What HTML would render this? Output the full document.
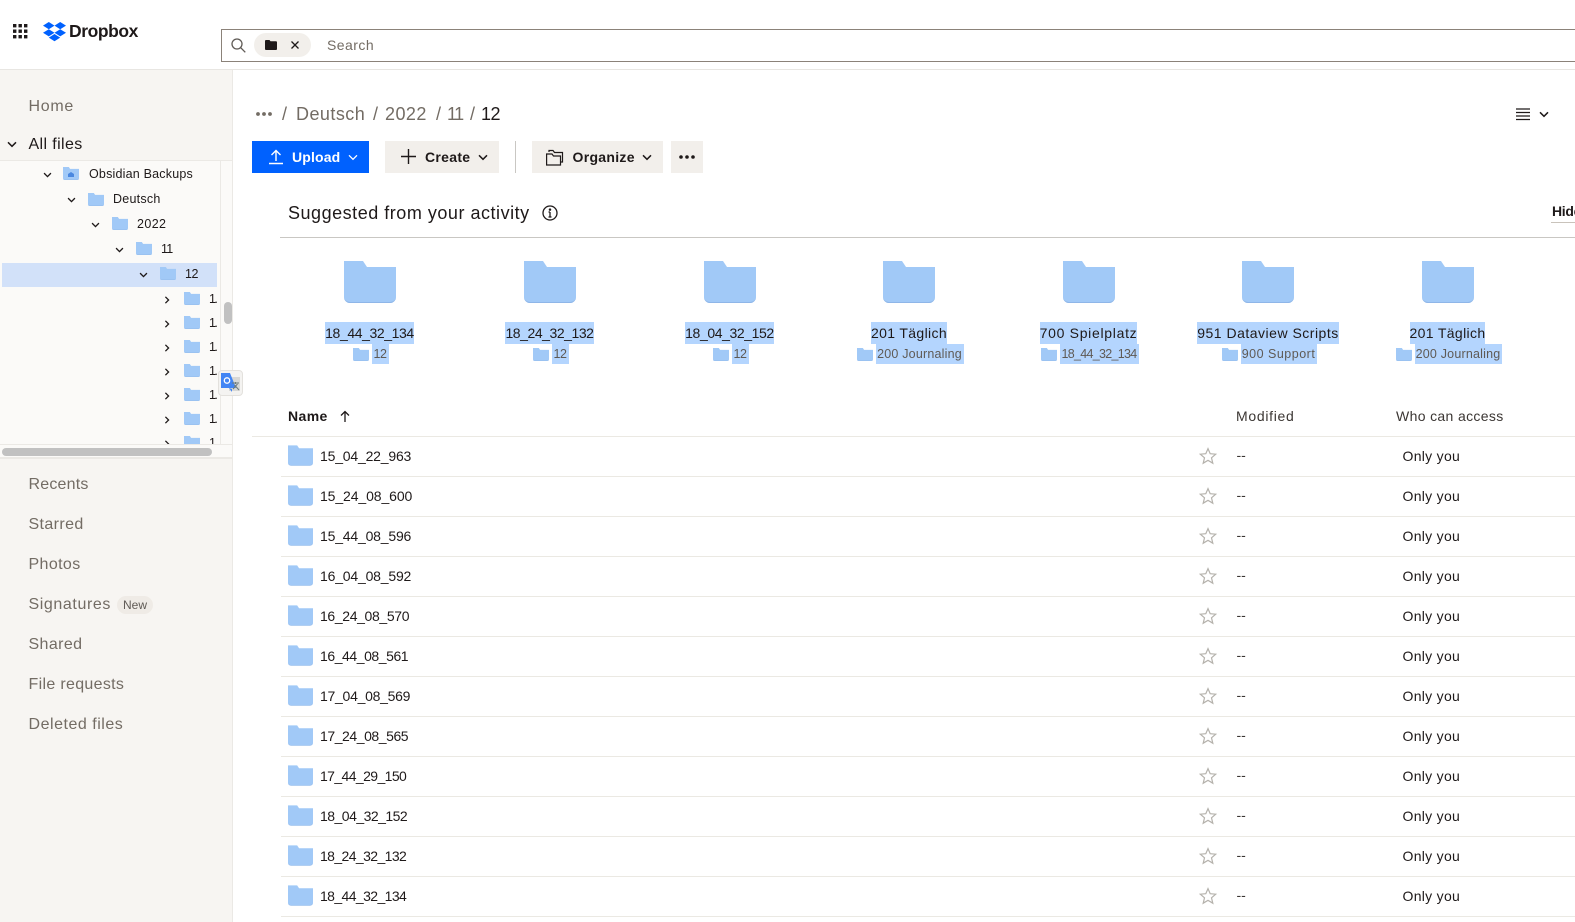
<!DOCTYPE html>
<html><head><meta charset="utf-8"><title>Dropbox</title>
<style>
html,body{margin:0;padding:0;width:1575px;height:922px;overflow:hidden;background:#fff}
body{position:relative;font-family:"Liberation Sans",sans-serif;color:#1e1919;font-size:14px}
.a{position:absolute}
.t{position:absolute;white-space:nowrap;line-height:20px;height:20px}
svg{display:block;overflow:visible}
.nav{left:28.5px;font-size:16px;letter-spacing:.38px;color:#736c64}
.tr{font-size:12.5px;color:#1e1919}
.cl{letter-spacing:-1.6px}
.btn{position:absolute;top:141px;height:32px;background:#f2efeb}
.bt{font-weight:bold;font-size:14px;letter-spacing:.15px}
.ln{position:absolute;left:281px;right:0;height:1px;background:#ebe9e3}
.nm{left:320px;font-size:14px;letter-spacing:-.19px}
.dd{left:1236.5px;color:#3b3633}
.oy{left:1402.5px;letter-spacing:.3px}
.s{position:absolute;width:179px;text-align:center}
.s1{display:inline-block;height:22px;line-height:22px;background:#b4d5fe;white-space:nowrap;font-size:14px}
.s2{display:flex;justify-content:center;align-items:center;height:20px;padding-left:3px;font-size:12.5px;color:#5f5a55;letter-spacing:.2px}
.s2 span{background:#b4d5fe;height:20px;line-height:20px;padding:0 2px 0 1px;margin-left:3px;white-space:nowrap}
</style></head><body>
<svg width="0" height="0" style="position:absolute">
<defs>
<symbol id="f" viewBox="0 0 52 42"><path fill="#a1c9f7" d="M0 0H19L23 6H52V36a6 6 0 0 1-6 6H6a6 6 0 0 1-6-6Z"/><path fill="#8fb6e8" d="M0 36a6 6 0 0 0 6 6H46a6 6 0 0 0 6-6a6 5.200 0 0 1-6 5H6a6 5.200 0 0 1-6-5Z"/></symbol>
<symbol id="cd" viewBox="0 0 10 7"><path d="M1 1.300L5 5.300L9 1.300" fill="none" stroke="#1e1919" stroke-width="1.500"/></symbol>
<symbol id="cr" viewBox="0 0 7 10"><path d="M1.500 1L5.500 5L1.500 9" fill="none" stroke="#1e1919" stroke-width="1.600"/></symbol>
<symbol id="st" viewBox="0 0 18 18"><path d="M9 1.600L11.200 6.700L16.700 7.200L12.500 10.800L13.800 16.200L9 13.300L4.200 16.200L5.500 10.800L1.300 7.200L6.800 6.700Z" fill="none" stroke="#b5b2ac" stroke-width="1.200"/></symbol>
</defs></svg>

<!-- header -->
<div class="a" style="left:0;top:69px;width:1575px;height:1px;background:#e8e6e2"></div>
<svg class="a" style="left:13px;top:24px" width="15" height="15" viewBox="0 0 15 15" fill="#1e1919"><rect x="0" y="0" width="3.400" height="3.400"/><rect x="5.500" y="0" width="3.400" height="3.400"/><rect x="11" y="0" width="3.400" height="3.400"/><rect x="0" y="5.500" width="3.400" height="3.400"/><rect x="5.500" y="5.500" width="3.400" height="3.400"/><rect x="11" y="5.500" width="3.400" height="3.400"/><rect x="0" y="11" width="3.400" height="3.400"/><rect x="5.500" y="11" width="3.400" height="3.400"/><rect x="11" y="11" width="3.400" height="3.400"/></svg>
<svg class="a" style="left:43px;top:21.500px" width="23" height="19" viewBox="0 0 23 19" fill="#0061fe"><path d="M5.800 0L11.500 3.600L5.800 7.200L0 3.600Z"/><path d="M17.200 0L23 3.600L17.200 7.200L11.500 3.600Z"/><path d="M0 10.800L5.800 7.200L11.500 10.800L5.800 14.400Z"/><path d="M17.200 7.200L23 10.800L17.200 14.400L11.500 10.800Z"/><path d="M5.800 15.600L11.500 12L17.200 15.600L11.500 19.200Z"/></svg>
<div class="t" style="left:69px;top:21px;font-size:17.500px;font-weight:bold;letter-spacing:-.42px">Dropbox</div>

<div class="a" style="left:221px;top:29px;width:1360px;height:31px;border:1px solid #8b8279;box-sizing:content-box"></div>
<svg class="a" style="left:231px;top:38px" width="15" height="15" viewBox="0 0 15 15" fill="none" stroke="#5f5a55" stroke-width="1.300"><circle cx="6" cy="6" r="5"/><path d="M9.700 9.700L14.300 14.300"/></svg>
<div class="a" style="left:254px;top:33px;width:57px;height:24px;border-radius:12px;background:#f2efeb"></div>
<svg class="a" style="left:265px;top:40px" width="12" height="10" viewBox="0 0 12 10" fill="#1e1919"><path d="M0 1a1 1 0 0 1 1-1H4.500L5.500 1.300H11a1 1 0 0 1 1 1V9a1 1 0 0 1-1 1H1a1 1 0 0 1-1-1Z"/></svg>
<svg class="a" style="left:291px;top:41px" width="8" height="8" viewBox="0 0 8 8" stroke="#1e1919" stroke-width="1.300"><path d="M.5 .5L7.500 7.500M7.500 .5L.5 7.500"/></svg>
<div class="t" style="left:327px;top:35px;color:#736c64;letter-spacing:.45px">Search</div>

<!-- sidebar -->
<div class="a" style="left:0;top:70px;width:232px;height:852px;background:#f7f5f2;border-right:1px solid #ebe9e5"></div>
<div class="t nav" style="top:97px;letter-spacing:.7px">Home</div>
<svg class="a" style="left:7px;top:141px" width="10" height="7"><use href="#cd"/></svg>
<div class="t nav" style="top:135px;color:#1e1919">All files</div>

<div class="a" style="left:0;top:160px;width:232px;height:299px;background:#fbfaf8;border-top:1px solid #ebe9e5;border-bottom:2px solid #ebe9e5;box-sizing:border-box"></div>
<div class="a" style="left:220px;top:160px;width:1px;height:284px;background:#ebe9e5"></div>
<div class="a" style="left:0;top:444px;width:232px;height:1px;background:#ebe9e5"></div>
<div class="a" style="left:2px;top:263px;width:215px;height:24px;background:#d2e1f9"></div>

<svg class="a" style="left:43px;top:172px" width="9" height="6"><use href="#cd"/></svg>
<svg class="a" style="left:63px;top:167px" width="16" height="13"><use href="#f"/></svg>
<svg class="a" style="left:68px;top:172px" width="6" height="5" viewBox="0 0 6 5" fill="#4a88e0"><path d="M0 2L3 0L6 2V5H0Z"/></svg>
<div class="t tr" style="left:89px;top:164px;letter-spacing:.2px">Obsidian Backups</div>

<svg class="a" style="left:67px;top:197px" width="9" height="6"><use href="#cd"/></svg>
<svg class="a" style="left:87.500px;top:193px" width="16" height="13"><use href="#f"/></svg>
<div class="t tr" style="left:113px;top:189px;letter-spacing:.25px">Deutsch</div>

<svg class="a" style="left:91px;top:222px" width="9" height="6"><use href="#cd"/></svg>
<svg class="a" style="left:111.500px;top:217px" width="16" height="13"><use href="#f"/></svg>
<div class="t tr" style="left:137px;top:214px;letter-spacing:.4px">2022</div>

<svg class="a" style="left:115px;top:247px" width="9" height="6"><use href="#cd"/></svg>
<svg class="a" style="left:135.500px;top:242px" width="16" height="13"><use href="#f"/></svg>
<div class="t tr" style="left:161px;top:239px;letter-spacing:-.8px">11</div>

<svg class="a" style="left:139px;top:272px" width="9" height="6"><use href="#cd"/></svg>
<svg class="a" style="left:159.500px;top:267px" width="16" height="13"><use href="#f"/></svg>
<div class="t tr" style="left:185px;top:264px;letter-spacing:-.4px">12</div>

<div class="a" style="left:0;top:288px;width:219px;height:156px;overflow:hidden">
<svg class="a" style="left:164px;top:8px" width="6" height="8"><use href="#cr"/></svg><svg class="a" style="left:183.500px;top:4px" width="16" height="13"><use href="#f"/></svg><div class="t tr cl" style="left:209px;top:1px">1.</div>
<svg class="a" style="left:164px;top:32px" width="6" height="8"><use href="#cr"/></svg><svg class="a" style="left:183.500px;top:28px" width="16" height="13"><use href="#f"/></svg><div class="t tr cl" style="left:209px;top:25px">1.</div>
<svg class="a" style="left:164px;top:56px" width="6" height="8"><use href="#cr"/></svg><svg class="a" style="left:183.500px;top:52px" width="16" height="13"><use href="#f"/></svg><div class="t tr cl" style="left:209px;top:49px">1.</div>
<svg class="a" style="left:164px;top:80px" width="6" height="8"><use href="#cr"/></svg><svg class="a" style="left:183.500px;top:76px" width="16" height="13"><use href="#f"/></svg><div class="t tr cl" style="left:209px;top:73px">1.</div>
<svg class="a" style="left:164px;top:104px" width="6" height="8"><use href="#cr"/></svg><svg class="a" style="left:183.500px;top:100px" width="16" height="13"><use href="#f"/></svg><div class="t tr cl" style="left:209px;top:97px">1.</div>
<svg class="a" style="left:164px;top:128px" width="6" height="8"><use href="#cr"/></svg><svg class="a" style="left:183.500px;top:124px" width="16" height="13"><use href="#f"/></svg><div class="t tr cl" style="left:209px;top:121px">1.</div>
<svg class="a" style="left:164px;top:152px" width="6" height="8"><use href="#cr"/></svg><svg class="a" style="left:183.500px;top:148px" width="16" height="13"><use href="#f"/></svg><div class="t tr cl" style="left:209px;top:145px">1.</div>
</div>
<div class="a" style="left:224px;top:302px;width:8px;height:22px;border-radius:4px;background:#c1c1c1"></div>
<div class="a" style="left:2px;top:448px;width:210px;height:8px;border-radius:4px;background:#c1c1c1"></div>

<div class="a" style="left:218px;top:370px;width:25px;height:26px;background:#f4f3f1;border:1px solid #e3e1dd;border-radius:4px;box-sizing:border-box"></div>
<svg class="a" style="left:221px;top:373px" width="20" height="20" viewBox="0 0 20 20"><rect x="8" y="4" width="11" height="14" fill="#d8d8d6"/><path d="M0 0H9L15 15H8L11 16L11 19L8 15H0Z" fill="#4285f4"/><path d="M11 10H18M14.500 9V11M12 16L16.500 11M13.500 12L18 17" stroke="#6d7a7a" stroke-width="1" fill="none"/><circle cx="6" cy="7.500" r="2.700" fill="none" stroke="#fff" stroke-width="1.300"/></svg>

<div class="t nav" style="top:475px;letter-spacing:.2px">Recents</div>
<div class="t nav" style="top:515px">Starred</div>
<div class="t nav" style="top:555px">Photos</div>
<div class="t nav" style="top:595px;letter-spacing:.6px">Signatures</div>
<div class="a" style="left:117px;top:596px;width:36px;height:18px;border-radius:9px;background:#efebe6;color:#5f5a55;font-size:12px;line-height:18px;text-align:center">New</div>
<div class="t nav" style="top:635px">Shared</div>
<div class="t nav" style="top:675px;letter-spacing:.32px">File requests</div>
<div class="t nav" style="top:715px;letter-spacing:.52px">Deleted files</div>

<!-- breadcrumb -->
<svg class="a" style="left:256px;top:112px" width="16" height="4" fill="#736c64"><circle cx="2" cy="2" r="1.900"/><circle cx="8" cy="2" r="1.900"/><circle cx="14" cy="2" r="1.900"/></svg>
<div class="t" style="left:282px;top:104px;font-size:18px;color:#736c64">/</div>
<div class="t" style="left:296px;top:104px;font-size:18px;color:#736c64;letter-spacing:.45px">Deutsch</div>
<div class="t" style="left:373px;top:104px;font-size:18px;color:#736c64">/</div>
<div class="t" style="left:385px;top:104px;font-size:18px;color:#736c64;letter-spacing:.45px">2022</div>
<div class="t" style="left:436px;top:104px;font-size:18px;color:#736c64">/</div>
<div class="t" style="left:447px;top:104px;font-size:18px;color:#736c64;letter-spacing:-1.500px">11</div>
<div class="t" style="left:470px;top:104px;font-size:18px;color:#736c64">/</div>
<div class="t" style="left:481px;top:104px;font-size:18px;color:#1e1919;letter-spacing:-.5px">12</div>

<svg class="a" style="left:1516px;top:108px" width="15" height="13" stroke="#1e1919" stroke-width="1.300"><path d="M0 1H14M0 4.500H14M0 8H14M0 11.500H14"/></svg>
<svg class="a" style="left:1538.500px;top:111px" width="10" height="7"><use href="#cd"/></svg>

<!-- toolbar -->
<div class="btn" style="left:252px;width:117px;background:#0061fe"></div>
<svg class="a" style="left:268px;top:149px" width="16" height="16" fill="none" stroke="#fff" stroke-width="1.400"><path d="M8 12V2M3.500 6L8 1.500L12.500 6M1 14.500H15"/></svg>
<div class="t bt" style="left:292px;top:147px;color:#fff">Upload</div>
<svg class="a" style="left:348px;top:154px" width="10" height="7" viewBox="0 0 10 7"><path d="M1 1.300L5 5.300L9 1.300" fill="none" stroke="#fff" stroke-width="1.300"/></svg>

<div class="btn" style="left:385px;width:114px"></div>
<svg class="a" style="left:401px;top:149px" width="15" height="15" stroke="#1e1919" stroke-width="1.400"><path d="M7.500 0V15M0 7.500H15"/></svg>
<div class="t bt" style="left:425px;top:147px;letter-spacing:.3px">Create</div>
<svg class="a" style="left:478px;top:154px" width="10" height="7"><use href="#cd"/></svg>

<div class="a" style="left:515px;top:141px;width:1px;height:32px;background:#c9c7c3"></div>

<div class="btn" style="left:532px;width:131px"></div>
<svg class="a" style="left:546px;top:149px" width="20" height="17" fill="none" stroke="#1e1919" stroke-width="1.200"><path d="M.6 5H6L7.500 7H14.500V16H.6Z"/><path d="M3 3V1.500H7L8.500 3.500H16.500V13H14.500"/></svg>
<div class="t bt" style="left:572.500px;top:147px;letter-spacing:.3px">Organize</div>
<svg class="a" style="left:642px;top:154px" width="10" height="7"><use href="#cd"/></svg>

<div class="btn" style="left:671px;width:32px"></div>
<svg class="a" style="left:679px;top:155px" width="16" height="4" fill="#1e1919"><circle cx="2" cy="2" r="1.800"/><circle cx="8" cy="2" r="1.800"/><circle cx="14" cy="2" r="1.800"/></svg>

<!-- suggested -->
<div class="t" style="left:288px;top:203px;font-size:18px;letter-spacing:.52px">Suggested from your activity</div>
<svg class="a" style="left:542px;top:205px" width="16" height="16" fill="none" stroke="#1e1919" stroke-width="1.300"><circle cx="8" cy="8" r="7"/><path d="M8 7V12M6.500 12H9.500M6.500 7H8"/><circle cx="8" cy="4.600" r=".6" fill="#1e1919"/></svg>
<div class="t" style="left:1552px;top:201px;font-weight:bold;font-size:14px;letter-spacing:-.3px">Hide</div>
<div class="a" style="left:1551px;top:222px;width:24px;height:1px;background:#c9c3bb"></div>
<div class="a" style="left:280px;top:237px;width:1295px;height:1px;background:#c9c7c3"></div>

<div class="s" style="left:280px;top:261px"><svg width="52" height="42" style="margin:0 auto"><use href="#f"/></svg><div style="height:19px"></div><span class="s1" style="letter-spacing:-.4px">18_44_32_134</span><div class="s2"><svg width="16" height="13"><use href="#f"/></svg><span style="letter-spacing:-.4px">12</span></div></div>
<div class="s" style="left:460px;top:261px"><svg width="52" height="42" style="margin:0 auto"><use href="#f"/></svg><div style="height:19px"></div><span class="s1" style="letter-spacing:-.45px">18_24_32_132</span><div class="s2"><svg width="16" height="13"><use href="#f"/></svg><span style="letter-spacing:-.4px">12</span></div></div>
<div class="s" style="left:640px;top:261px"><svg width="52" height="42" style="margin:0 auto"><use href="#f"/></svg><div style="height:19px"></div><span class="s1" style="letter-spacing:-.4px">18_04_32_152</span><div class="s2"><svg width="16" height="13"><use href="#f"/></svg><span style="letter-spacing:-.4px">12</span></div></div>
<div class="s" style="left:819.500px;top:261px"><svg width="52" height="42" style="margin:0 auto"><use href="#f"/></svg><div style="height:19px"></div><span class="s1" style="letter-spacing:.35px">201 Täglich</span><div class="s2"><svg width="16" height="13"><use href="#f"/></svg><span>200 Journaling</span></div></div>
<div class="s" style="left:999px;top:261px"><svg width="52" height="42" style="margin:0 auto"><use href="#f"/></svg><div style="height:19px"></div><span class="s1" style="letter-spacing:.7px">700 Spielplatz</span><div class="s2"><svg width="16" height="13"><use href="#f"/></svg><span style="letter-spacing:-.7px">18_44_32_134</span></div></div>
<div class="s" style="left:1178.500px;top:261px"><svg width="52" height="42" style="margin:0 auto"><use href="#f"/></svg><div style="height:19px"></div><span class="s1" style="letter-spacing:.5px">951 Dataview Scripts</span><div class="s2"><svg width="16" height="13"><use href="#f"/></svg><span style="letter-spacing:.5px">900 Support</span></div></div>
<div class="s" style="left:1358px;top:261px"><svg width="52" height="42" style="margin:0 auto"><use href="#f"/></svg><div style="height:19px"></div><span class="s1" style="letter-spacing:.35px">201 Täglich</span><div class="s2"><svg width="16" height="13"><use href="#f"/></svg><span>200 Journaling</span></div></div>

<!-- table header -->
<div class="t" style="left:288px;top:406px;font-weight:bold;font-size:14px;letter-spacing:.4px">Name</div>
<svg class="a" style="left:340px;top:410px" width="10" height="12" fill="none" stroke="#1e1919" stroke-width="1.300"><path d="M5 12V1.500M1 5.500L5 1.500L9 5.500"/></svg>
<div class="t" style="left:1236px;top:406px;color:#3b3633;letter-spacing:.7px">Modified</div>
<div class="t" style="left:1396px;top:406px;color:#3b3633;letter-spacing:.35px">Who can access</div>
<div class="a" style="left:252px;top:436px;right:0;height:1px;background:#ebe9e3"></div>

<!-- rows -->
<svg class="a" style="left:288px;top:445px" width="25" height="21"><use href="#f"/></svg><div class="t nm" style="top:446px">15_04_22_963</div><svg class="a" style="left:1199px;top:447px" width="18" height="18"><use href="#st"/></svg><div class="t dd" style="top:445px">--</div><div class="t oy" style="top:446px">Only you</div><div class="ln" style="top:476px"></div>
<svg class="a" style="left:288px;top:485px" width="25" height="21"><use href="#f"/></svg><div class="t nm" style="top:486px;letter-spacing:-.1px">15_24_08_600</div><svg class="a" style="left:1199px;top:487px" width="18" height="18"><use href="#st"/></svg><div class="t dd" style="top:485px">--</div><div class="t oy" style="top:486px">Only you</div><div class="ln" style="top:516px"></div>
<svg class="a" style="left:288px;top:525px" width="25" height="21"><use href="#f"/></svg><div class="t nm" style="top:526px">15_44_08_596</div><svg class="a" style="left:1199px;top:527px" width="18" height="18"><use href="#st"/></svg><div class="t dd" style="top:525px">--</div><div class="t oy" style="top:526px">Only you</div><div class="ln" style="top:556px"></div>
<svg class="a" style="left:288px;top:565px" width="25" height="21"><use href="#f"/></svg><div class="t nm" style="top:566px">16_04_08_592</div><svg class="a" style="left:1199px;top:567px" width="18" height="18"><use href="#st"/></svg><div class="t dd" style="top:565px">--</div><div class="t oy" style="top:566px">Only you</div><div class="ln" style="top:596px"></div>
<svg class="a" style="left:288px;top:605px" width="25" height="21"><use href="#f"/></svg><div class="t nm" style="top:606px;letter-spacing:-.36px">16_24_08_570</div><svg class="a" style="left:1199px;top:607px" width="18" height="18"><use href="#st"/></svg><div class="t dd" style="top:605px">--</div><div class="t oy" style="top:606px">Only you</div><div class="ln" style="top:636px"></div>
<svg class="a" style="left:288px;top:645px" width="25" height="21"><use href="#f"/></svg><div class="t nm" style="top:646px;letter-spacing:-.44px">16_44_08_561</div><svg class="a" style="left:1199px;top:647px" width="18" height="18"><use href="#st"/></svg><div class="t dd" style="top:645px">--</div><div class="t oy" style="top:646px">Only you</div><div class="ln" style="top:676px"></div>
<svg class="a" style="left:288px;top:685px" width="25" height="21"><use href="#f"/></svg><div class="t nm" style="top:686px;letter-spacing:-.27px">17_04_08_569</div><svg class="a" style="left:1199px;top:687px" width="18" height="18"><use href="#st"/></svg><div class="t dd" style="top:685px">--</div><div class="t oy" style="top:686px">Only you</div><div class="ln" style="top:716px"></div>
<svg class="a" style="left:288px;top:725px" width="25" height="21"><use href="#f"/></svg><div class="t nm" style="top:726px;letter-spacing:-.44px">17_24_08_565</div><svg class="a" style="left:1199px;top:727px" width="18" height="18"><use href="#st"/></svg><div class="t dd" style="top:725px">--</div><div class="t oy" style="top:726px">Only you</div><div class="ln" style="top:756px"></div>
<svg class="a" style="left:288px;top:765px" width="25" height="21"><use href="#f"/></svg><div class="t nm" style="top:766px;letter-spacing:-.6px">17_44_29_150</div><svg class="a" style="left:1199px;top:767px" width="18" height="18"><use href="#st"/></svg><div class="t dd" style="top:765px">--</div><div class="t oy" style="top:766px">Only you</div><div class="ln" style="top:796px"></div>
<svg class="a" style="left:288px;top:805px" width="25" height="21"><use href="#f"/></svg><div class="t nm" style="top:806px;letter-spacing:-.52px">18_04_32_152</div><svg class="a" style="left:1199px;top:807px" width="18" height="18"><use href="#st"/></svg><div class="t dd" style="top:805px">--</div><div class="t oy" style="top:806px">Only you</div><div class="ln" style="top:836px"></div>
<svg class="a" style="left:288px;top:845px" width="25" height="21"><use href="#f"/></svg><div class="t nm" style="top:846px;letter-spacing:-.6px">18_24_32_132</div><svg class="a" style="left:1199px;top:847px" width="18" height="18"><use href="#st"/></svg><div class="t dd" style="top:845px">--</div><div class="t oy" style="top:846px">Only you</div><div class="ln" style="top:876px"></div>
<svg class="a" style="left:288px;top:885px" width="25" height="21"><use href="#f"/></svg><div class="t nm" style="top:886px;letter-spacing:-.6px">18_44_32_134</div><svg class="a" style="left:1199px;top:887px" width="18" height="18"><use href="#st"/></svg><div class="t dd" style="top:885px">--</div><div class="t oy" style="top:886px">Only you</div><div class="ln" style="top:916px"></div>
</body></html>
